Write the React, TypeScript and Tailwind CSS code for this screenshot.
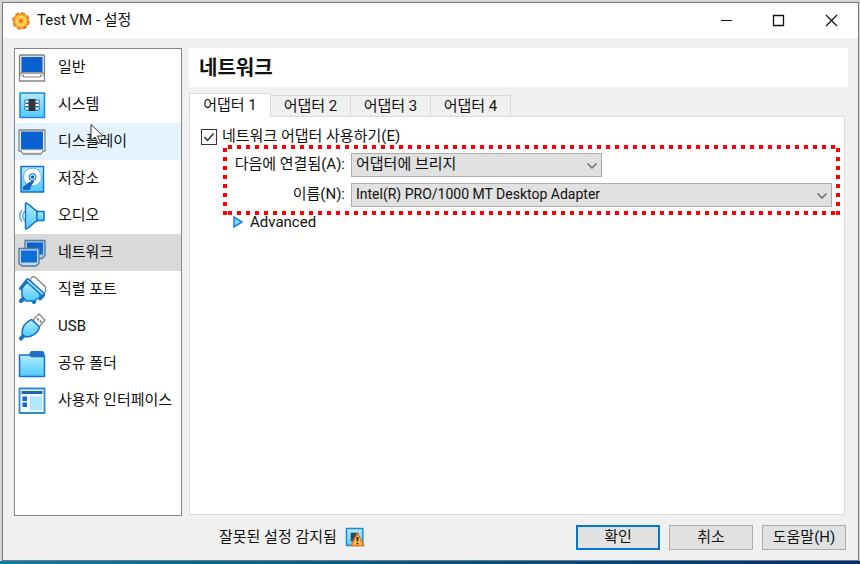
import { useState, type ReactNode } from "react";

const BLUE = "#1672c4";

function Icon({ children, size = 28 }: { children: ReactNode; size?: number }) {
  return (
    <svg viewBox="0 0 28 28" width={size} height={size} fill="none" strokeLinejoin="round" className="shrink-0" aria-hidden="true">
      <defs>
        <linearGradient id="sky" x1="0" y1="0" x2="0" y2="1">
          <stop offset="0" stopColor="#b4ecff" />
          <stop offset="1" stopColor="#4fcaff" />
        </linearGradient>
        <linearGradient id="screen" x1="0" y1="0" x2="1" y2="1">
          <stop offset="0" stopColor="#0a56c0" />
          <stop offset="1" stopColor="#0f74e6" />
        </linearGradient>
      </defs>
      {children}
    </svg>
  );
}

const GeneralIcon = () => (
  <Icon>
    <path d="M1.500 18.500h25V27h-25z" fill="#fff" stroke="#858585" strokeWidth="1.300" />
    <path d="M2 21h3.500v2h17v-2H26" stroke="#858585" />
    <path d="M2 19.500h24" stroke="#fff" strokeWidth="1.500" />
    <rect x="1.500" y="1" width="25" height="18" rx="1" fill="#e2ded8" stroke="#858585" strokeWidth="1.300" />
    <rect x="3.500" y="3" width="21" height="15" fill="#0a62d0" />
  </Icon>
);

const SystemIcon = () => (
  <Icon>
    <rect x="2" y="2" width="24.500" height="24.500" fill="url(#sky)" stroke="#1b86dc" strokeWidth="1.500" />
    <g fill="#fff" stroke={BLUE}>
      <rect x="6.500" y="9" width="15" height="3" rx="1" />
      <rect x="6.500" y="12.500" width="15" height="3" rx="1" />
      <rect x="6.500" y="16" width="15" height="3" rx="1" />
    </g>
    <rect x="10.500" y="8" width="7" height="12" fill="#33373d" />
  </Icon>
);

const DisplayIcon = () => (
  <Icon>
    <path d="M1 2h26v21h-2l-2 3H5l-2-3H1z" fill="#eeeae4" stroke="#858585" strokeWidth="1.300" />
    <rect x="3" y="3.500" width="22" height="18" fill="#0a62d0" />
    <path d="M5 23.500h18" stroke="#fff" />
  </Icon>
);

const StorageIcon = () => (
  <Icon>
    <rect x="3" y="1.500" width="22.500" height="25.500" fill="url(#sky)" stroke={BLUE} strokeWidth="1.500" />
    <circle cx="14.500" cy="12" r="9" fill="#fff" stroke="#5eb4e8" />
    <circle cx="14.500" cy="12" r="3.500" fill="#a8e4ff" stroke={BLUE} />
    <circle cx="14.500" cy="12" r="1.500" fill="#14417c" />
    <path d="m15 15-5 3-5 4v3h7l1-4 3-4z" fill="#1765bd" />
  </Icon>
);

const AudioIcon = () => (
  <Icon>
    <path d="M4 8c-3 4-3 8 0 12M7 9c-3 3-3 7 0 10" stroke="#64aee8" strokeWidth="1.600" />
    <path d="M7.500 1c3 0 6 5 12 8.500v9C14 21 11 27 7.500 27z" fill="url(#sky)" stroke={BLUE} strokeWidth="1.500" />
    <path d="M19 9.500h7v9h-7z" fill="url(#sky)" stroke={BLUE} strokeWidth="1.500" />
  </Icon>
);

const NetworkIcon = () => (
  <Icon>
    <path d="M7 1.500h20v15l-3 3H10l-3-3z" fill="#a9c9df" stroke="#51799c" strokeWidth="1.300" />
    <rect x="9" y="3.500" width="16" height="12" fill="url(#screen)" />
    <path d="M1 9.500h20v15l-3 2.500H4l-3-2.500z" fill="#bdd8e8" stroke="#51799c" strokeWidth="1.300" />
    <rect x="3" y="11.500" width="16" height="12" fill="#0f6fd8" />
  </Icon>
);

const SerialIcon = () => (
  <Icon>
    <path d="m12 4 2-3h3L27.500 11v5l-3 1z" fill="#fff" stroke="#858585" strokeWidth="1.300" />
    <path d="m6 22-3 3M15 24l1 2" stroke={BLUE} strokeWidth="4" strokeLinecap="round" />
    <path d="M9 6 22 17v4l-6 4H8l-4-5V12z" fill="url(#sky)" stroke={BLUE} strokeWidth="1.500" />
    <path d="m9.500 2.500 17 15-2 2.500L7.500 5z" fill="#8fdcff" stroke={BLUE} strokeWidth="1.300" />
    <path d="m2.500 12.500 5.500-7M22 23l3.500-3.500" stroke={BLUE} strokeWidth="3" strokeLinecap="round" />
  </Icon>
);

const UsbIcon = () => (
  <Icon>
    <path d="m15 7 6-6 6 6-6 7z" fill="#fff" stroke="#858585" strokeWidth="1.300" />
    <path d="M20 5.500v2M22.500 7.500v2" stroke="#555" strokeWidth="1.600" />
    <path d="m5 23-2 2.500" stroke={BLUE} strokeWidth="4" strokeLinecap="round" />
    <path d="M13.500 6.500 21.500 14c-2 7-8 10-14 10L4 20.500c0-6 3-11 9.500-14z" fill="url(#sky)" stroke={BLUE} strokeWidth="1.500" />
  </Icon>
);

const FolderIcon = () => (
  <Icon>
    <path d="M11 5.500 13 1.500h12l1.500 4v2H11z" fill="#2271c8" stroke="#2271c8" />
    <path d="M1.500 5h10l2 1.500h13v20h-25z" fill="url(#sky)" stroke={BLUE} strokeWidth="1.500" />
  </Icon>
);

const InterfaceIcon = () => (
  <Icon>
    <rect x="1.500" y="1.500" width="25" height="24.500" fill="#f1faff" stroke="#2f88d0" strokeWidth="1.800" />
    <path d="M3.500 4h21v3h-21z" fill="#1d64b4" />
    <path d="M4.500 9.500h4.500V14H4.500zM4.500 15.500h4.500V20H4.500z" fill="#1765d0" />
    <path d="M12 9.500h12V23H12z" fill="#b2e6fb" />
  </Icon>
);

const ChipWarningIcon = () => (
  <Icon size={20}>
    <rect x="2" y="2" width="23" height="24" fill="url(#sky)" stroke="#1b86dc" strokeWidth="2" />
    <path d="M8 8h11v12H8z" fill="#33475d" />
    <path d="m17.500 9 9 17h-18z" fill="#ffc250" stroke="#e57717" strokeWidth="2" />
    <path d="M17.500 14v6M17.500 22v2" stroke="#222" strokeWidth="2.500" />
  </Icon>
);

const GearIcon = () => (
  <svg viewBox="0 0 20 20" width="20" height="20" className="shrink-0" aria-hidden="true">
    <circle cx="10" cy="10" r="7.800" fill="none" stroke="#e07a1c" strokeWidth="2" strokeDasharray="4.100 2" />
    <circle cx="10" cy="10" r="7.300" fill="#ffb02e" stroke="#e5801e" />
    <circle cx="10" cy="10" r="4.200" fill="none" stroke="#ffd35f" strokeWidth="2" />
    <circle cx="10" cy="10" r="1.200" fill="#c8600f" />
  </svg>
);

const categories = [
  { label: "일반", Icon: GeneralIcon },
  { label: "시스템", Icon: SystemIcon },
  { label: "디스플레이", Icon: DisplayIcon },
  { label: "저장소", Icon: StorageIcon },
  { label: "오디오", Icon: AudioIcon },
  { label: "네트워크", Icon: NetworkIcon },
  { label: "직렬 포트", Icon: SerialIcon },
  { label: "USB", Icon: UsbIcon },
  { label: "공유 폴더", Icon: FolderIcon },
  { label: "사용자 인터페이스", Icon: InterfaceIcon },
];

const hovered = "디스플레이";

const adapters = ["어댑터 1", "어댑터 2", "어댑터 3", "어댑터 4"];

function Select({ id, value, className }: { id: string; value: string; className: string }) {
  return (
    <div className={`relative ${className}`}>
      <select id={id} defaultValue={value} className="block h-6 w-full appearance-none border border-[#adadad] bg-[#e1e1e1] pr-6 pb-[2px] pl-1 leading-5">
        <option>{value}</option>
      </select>
      <svg viewBox="0 0 10 6" className="pointer-events-none absolute top-[10px] right-[5px] h-[6px] w-[10px]" fill="none" stroke="#666" strokeWidth="1.400">
        <path d="m.5.5 4.500 4.500L9.500.5" />
      </svg>
    </div>
  );
}

function TitleBar() {
  return (
    <header className="flex h-[35px] shrink-0 items-center bg-white pl-2">
      <GearIcon />
      <h1 className="ml-[6px] flex-1 pb-[2px]">Test VM - 설정</h1>
      <div className="flex">
        <button aria-label="Minimize" className="flex h-[35px] w-[52px] items-center justify-center">
          <svg width="13" height="13" stroke="#111"><path d="M1 6.500h11" /></svg>
        </button>
        <button aria-label="Maximize" className="flex h-[35px] w-[52px] items-center justify-center">
          <svg width="13" height="13" stroke="#111" strokeWidth="1.300" fill="none"><path d="M1.500 1.500h10v10h-10z" /></svg>
        </button>
        <button aria-label="Close" className="flex h-[35px] w-[54px] items-center justify-center">
          <svg width="13" height="13" stroke="#111" strokeWidth="1.200"><path d="m1 1 11 11M12 1 1 12" /></svg>
        </button>
      </div>
    </header>
  );
}

function Sidebar({ current, onSelect }: { current: string; onSelect: (label: string) => void }) {
  return (
    <nav className="w-[168px] shrink-0 border border-[#828790] bg-white">
      {categories.map(({ label, Icon: CategoryIcon }) => (
        <button
          key={label}
          onClick={() => onSelect(label)}
          className={`relative flex h-[37px] w-full items-center gap-3 pl-[3px] whitespace-nowrap ${
            label === current ? "bg-[#d9d9d9]" : label === hovered ? "bg-[#e5f3ff]" : "bg-white"
          }`}
        >
          <CategoryIcon />
          <span className="pb-[2px]">{label}</span>
          {label === hovered && (
            <svg viewBox="0 0 14 22" className="pointer-events-none absolute top-0 left-[75px] h-[22px] w-[14px]" fill="#fff" stroke="#333">
              <path d="M1 1.500v16l4-3.500 3 6.500 2.500-1-3-6.500H13z" />
            </svg>
          )}
        </button>
      ))}
    </nav>
  );
}

// dotted red frame round the bridge settings
function Highlight() {
  return (
    <svg className="pointer-events-none absolute top-[-4px] left-0 h-[70px] w-[calc(100%+8px)]" stroke="#f00" strokeWidth="4" strokeDasharray="4 5">
      <line x1="5" y1="2" x2="100%" y2="2" />
      <line x1="5" y1="68" x2="100%" y2="68" />
      <line x1="2" y1="3" x2="2" y2="70" />
      <svg x="100%" overflow="visible">
        <line x1="-2" y1="3" x2="-2" y2="70" />
      </svg>
    </svg>
  );
}

function AdapterForm() {
  const [enabled, setEnabled] = useState(true);

  return (
    <div className="pt-2 pr-3 pl-[11px]">
      <label className="flex h-6 items-center gap-[5px]">
        <span className="relative flex">
          <input
            type="checkbox"
            checked={enabled}
            onChange={(e) => setEnabled(e.target.checked)}
            className="h-4 w-4 appearance-none border border-[#333] bg-white"
          />
          {enabled && (
            <svg viewBox="0 0 16 16" className="pointer-events-none absolute inset-0" fill="none" stroke="#222" strokeWidth="1.300">
              <path d="m3.500 8 3 3.500 6-7" />
            </svg>
          )}
        </span>
        <span className="pb-[2px]">네트워크 어댑터 사용하기(E)</span>
      </label>

      <div className="relative ml-[22px] grid grid-cols-[122px_1fr] items-center gap-x-[6px] gap-y-[6px] pt-1">
        <label htmlFor="attached" className="pb-[2px] text-right whitespace-nowrap">다음에 연결됨(A):</label>
        <Select id="attached" value="어댑터에 브리지" className="w-[251px] max-w-full" />
        <label htmlFor="name" className="pb-[2px] text-right">이름(N):</label>
        <Select id="name" value="Intel(R) PRO/1000 MT Desktop Adapter" className="w-full text-[14px]" />
        <Highlight />
      </div>

      <button className="mt-1 ml-8 flex h-6 items-center gap-[7px] pb-[2px]">
        <svg viewBox="0 0 10 12" width="10" height="12"><path d="M1 1v10l8-5z" fill="#7fd6ff" stroke="#1b80dd" strokeWidth="1.500" /></svg>
        Advanced
      </button>
    </div>
  );
}

export default function App() {
  const [category, setCategory] = useState("네트워크");
  const [tab, setTab] = useState(adapters[0]);

  return (
    <div className="flex h-screen flex-col bg-[#d5d5d5] pt-[2px] font-['Roboto','Noto_Sans_CJK_KR',sans-serif] text-[15px] leading-5 text-[#111]">
      <main className="mr-px ml-[2px] flex min-h-0 flex-1 flex-col border border-[#777] bg-[#f0f0f0]">
        <TitleBar />
        <div className="flex min-h-0 flex-1 gap-[7px] pt-[10px] pr-[10px] pl-[11px]">
          <Sidebar current={category} onSelect={setCategory} />
          <section className="flex min-w-0 flex-1 flex-col">
            <h2 className="flex h-[39px] shrink-0 items-center bg-white pl-[10px] text-[20px] font-bold">{category}</h2>
            <div role="tablist" className="mt-[6px] flex h-[23px] shrink-0 items-end">
              {adapters.map((name) => (
                <button
                  key={name}
                  role="tab"
                  aria-selected={name === tab}
                  onClick={() => setTab(name)}
                  className={
                    name === tab
                      ? "relative -mb-px h-6 w-[82px] border border-b-0 border-[#d9d9d9] bg-white pb-[2px]"
                      : "h-[21px] w-[80px] border border-b-0 border-l-0 border-[#d9d9d9] bg-[#f0f0f0] pb-[2px]"
                  }
                >
                  {name}
                </button>
              ))}
            </div>
            <div role="tabpanel" className="mr-[3px] mb-px flex-1 border border-[#dcdcdc] bg-white">
              <AdapterForm />
            </div>
          </section>
        </div>
        <footer className="flex h-[44px] shrink-0 items-center pr-3 pb-[2px] pl-[216px]">
          <p className="flex flex-1 items-center gap-2">잘못된 설정 감지됨 <ChipWarningIcon /></p>
          <div className="flex gap-[9px]">
            <button className="h-[25px] w-[84px] border-2 border-[#0078d7] bg-[#e1e1e1]">확인</button>
            <button className="h-[25px] w-[84px] border border-[#adadad] bg-[#e1e1e1]">취소</button>
            <button className="h-[25px] w-[84px] border border-[#adadad] bg-[#e1e1e1]">도움말(H)</button>
          </div>
        </footer>
      </main>
      <div className="h-[3px] shrink-0 bg-linear-to-r from-[#0a7fa8] via-[#00558c] to-[#002f75]" />
    </div>
  );
}
